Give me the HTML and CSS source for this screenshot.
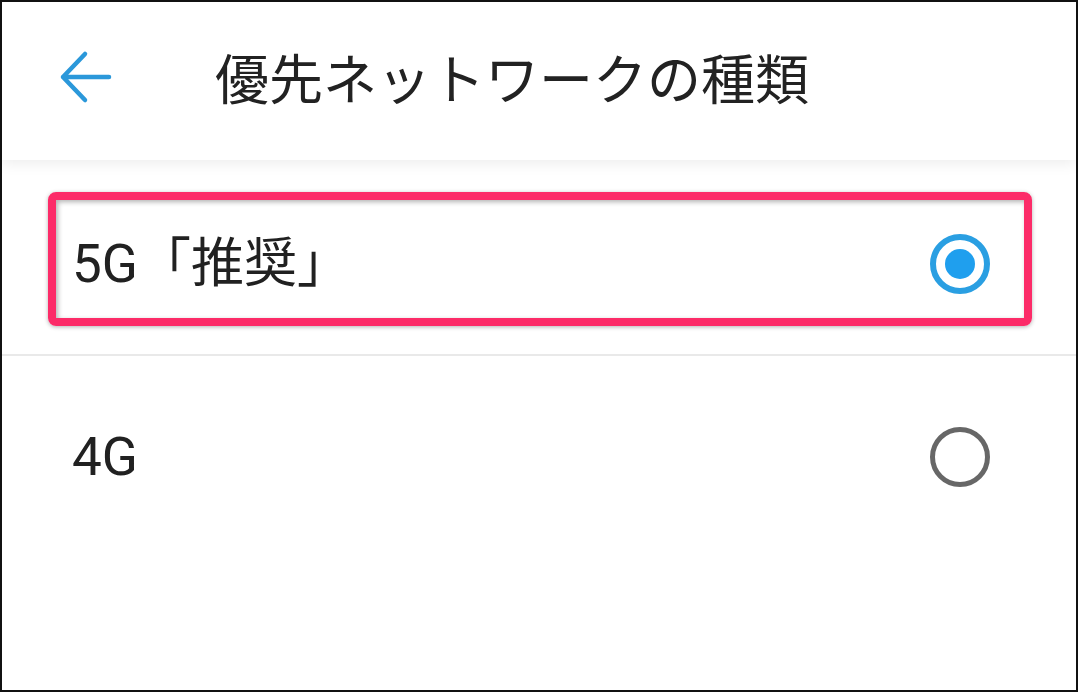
FILE: index.html
```html
<!DOCTYPE html>
<html lang="ja">
<head>
<meta charset="utf-8">
<title>優先ネットワークの種類</title>
<link rel="stylesheet" href="styles.css">
</head>
<body>
<div class="frame">
  <header class="appbar">
    <svg class="back" width="56" height="56" viewBox="0 0 56 56" aria-hidden="true">
      <path d="M51 28H5M27 5L5 28L27 51" fill="none" stroke="#2b98da" stroke-width="4.5" stroke-linecap="round" stroke-linejoin="round"/>
    </svg>
    <h1 class="title">優先ネットワークの種類</h1>
  </header>
  <ul class="list">
    <li class="row row-first">
      <span class="label">5G「推奨」</span>
      <span class="radio radio-on"><span class="dot"></span></span>
      <span class="highlight"></span>
    </li>
    <li class="divider"></li>
    <li class="row row-second">
      <span class="label">4G</span>
      <span class="radio radio-off"></span>
    </li>
  </ul>
</div>
</body>
</html>
```

FILE: styles.css
```css
html, body {
  margin: 0;
  padding: 0;
  background: #ffffff;
}

.frame {
  width: 1078px;
  height: 692px;
  box-sizing: border-box;
  border: 2px solid #111111;
  background: #ffffff;
  overflow: hidden;
  display: flex;
  flex-direction: column;
  font-family: Roboto, "Noto Sans CJK JP", sans-serif;
  color: #212121;
}

.appbar {
  position: relative;
  z-index: 2;
  height: 158px;
  flex: 0 0 158px;
  box-sizing: border-box;
  display: flex;
  align-items: center;
  padding-left: 56px;
  padding-bottom: 8px;
  background: #ffffff;
  box-shadow: 0 3px 14px rgba(0, 0, 0, 0.08);
}

.back {
  flex: 0 0 56px;
  display: block;
}

.title {
  margin: 0 0 0 101px;
  font-family: "Noto Sans CJK JP", sans-serif;
  font-weight: 400;
  font-size: 54px;
  line-height: 1;
  color: #222222;
  letter-spacing: 0;
}

.list {
  list-style: none;
  margin: 0;
  padding: 0;
  display: flex;
  flex-direction: column;
}

.row {
  position: relative;
  display: flex;
  align-items: center;
  justify-content: space-between;
  padding-left: 70px;
  padding-right: 86px;
  box-sizing: border-box;
}

.row-first {
  height: 194px;
  padding-top: 14px;
}

.row-second {
  height: 202px;
}

.label {
  font-size: 53px;
  line-height: 1;
  color: #212121;
}

.radio {
  width: 60px;
  height: 60px;
  box-sizing: border-box;
  border-radius: 50%;
  display: flex;
  align-items: center;
  justify-content: center;
  flex: 0 0 60px;
}

.radio-on {
  border: 6px solid #2a9fe2;
}

.radio-on .dot {
  width: 30px;
  height: 30px;
  border-radius: 50%;
  background: #1f9fee;
}

.radio-off {
  border: 5.5px solid #676767;
}

.divider {
  height: 2px;
  background: #e9e9e9;
}

.highlight {
  position: absolute;
  left: 46px;
  top: 32px;
  width: 984px;
  height: 134px;
  box-sizing: border-box;
  border: 8px solid #fc2b68;
  border-radius: 8px;
  box-shadow: 0 1px 4px rgba(0, 0, 0, 0.3), inset 2px 2px 5px rgba(0, 0, 0, 0.3);
  pointer-events: none;
}
```
